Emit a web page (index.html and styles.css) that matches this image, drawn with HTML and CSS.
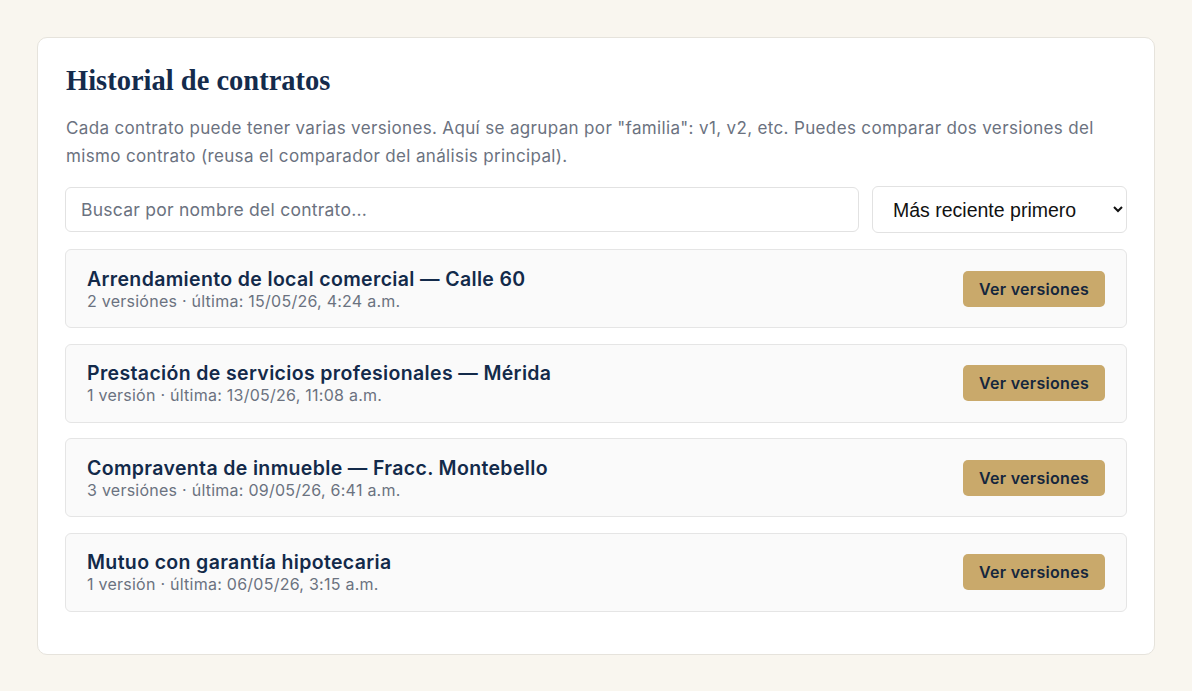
FILE: index.html
```html
<!DOCTYPE html>
<html lang="es">
<head>
    <meta charset="UTF-8">
    <meta name="viewport" content="width=device-width, initial-scale=1.0">
    <title>Historial de contratos</title>
    <link rel="stylesheet" href="styles.css">
</head>
<body>

    <!-- Historial -->
    <section class="panel">
        <h2 class="panel-title">Historial de contratos</h2>
        <p class="panel-desc">Cada contrato puede tener varias versiones. Aquí se agrupan por "familia": v1, v2, etc. Puedes comparar dos versiones del mismo contrato (reusa el comparador del análisis principal).</p>

        <div class="filters">
            <input type="text" class="search" placeholder="Buscar por nombre del contrato...">
            <select class="sort">
                <option>Más reciente primero</option>
                <option>Más antiguo primero</option>
            </select>
        </div>

        <div class="family-list">
            <div class="family">
                <div class="family-info">
                    <h3>Arrendamiento de local comercial — Calle 60</h3>
                    <p>2 versiónes · última: 15/05/26, 4:24 a.m.</p>
                </div>
                <button class="btn-versions">Ver versiones</button>
            </div>
            <div class="family">
                <div class="family-info">
                    <h3>Prestación de servicios profesionales — Mérida</h3>
                    <p>1 versión · última: 13/05/26, 11:08 a.m.</p>
                </div>
                <button class="btn-versions">Ver versiones</button>
            </div>
            <div class="family">
                <div class="family-info">
                    <h3>Compraventa de inmueble — Fracc. Montebello</h3>
                    <p>3 versiónes · última: 09/05/26, 6:41 a.m.</p>
                </div>
                <button class="btn-versions">Ver versiones</button>
            </div>
            <div class="family">
                <div class="family-info">
                    <h3>Mutuo con garantía hipotecaria</h3>
                    <p>1 versión · última: 06/05/26, 3:15 a.m.</p>
                </div>
                <button class="btn-versions">Ver versiones</button>
            </div>
        </div>
    </section>

</body>
</html>
```

FILE: styles.css
```css
body, html {
    margin: 0;
    padding: 0;
}

body {
    background-color: #f9f6ef;
    font-family: Inter, "Liberation Sans", Arial, sans-serif;
    padding: 37px 37px;
}

/* Panel */
.panel {
    background-color: #fff;
    border: 1px solid #e6e3dc;
    border-radius: 10px;
    padding: 26px 27px 42px 27px;
}

.panel-title {
    font-family: "Liberation Serif", "Times New Roman", serif;
    font-size: 28.5px;
    font-weight: bold;
    color: #142b4c;
    margin: 0 0 16px 1px;
    line-height: 34px;
}

.panel-desc {
    font-size: 17px;
    letter-spacing: 0.35px;
    line-height: 28px;
    color: #6b7280;
    margin: 0 0 16px 1px;
}

/* Filters */
.filters {
    display: flex;
    gap: 13px;
    align-items: center;
    margin-bottom: 16px;
}

.search {
    flex: 1;
    height: 45px;
    box-sizing: border-box;
    padding: 0 15px;
    border: 1px solid #e2e2e2;
    border-radius: 6px;
    font-family: inherit;
    font-size: 17.5px;
    letter-spacing: 0.25px;
    color: #1f2937;
}

.search::placeholder {
    color: #6b7280;
}

.sort {
    width: 255px;
    height: 47px;
    box-sizing: border-box;
    padding: 0 10px 0 16px;
    border: 1px solid #e2e2e2;
    border-radius: 6px;
    background-color: #fff;
    font-family: "Liberation Sans", Arial, sans-serif;
    font-size: 19.5px;
    color: #111;
}

/* Families */
.family-list {
    display: flex;
    flex-direction: column;
    gap: 15.5px;
}

.family {
    display: flex;
    justify-content: space-between;
    align-items: center;
    box-sizing: border-box;
    background-color: #fafafa;
    border: 1px solid #e5e5e5;
    border-radius: 6px;
    padding: 0 21px;
    height: 79px;
}

.family-info h3 {
    margin: 0;
    font-size: 19.5px;
    letter-spacing: 0.35px;
    font-weight: 600;
    color: #132a4a;
    line-height: 24px;
}

.family-info p {
    margin: 0;
    font-size: 16px;
    letter-spacing: 0.25px;
    color: #6b7280;
    line-height: 20px;
}

.btn-versions {
    background-color: #c9a96b;
    color: #15263d;
    border: none;
    border-radius: 5px;
    width: 142px;
    height: 36px;
    font-family: inherit;
    font-size: 16px;
    letter-spacing: 0.3px;
    font-weight: 600;
    cursor: pointer;
}
```
